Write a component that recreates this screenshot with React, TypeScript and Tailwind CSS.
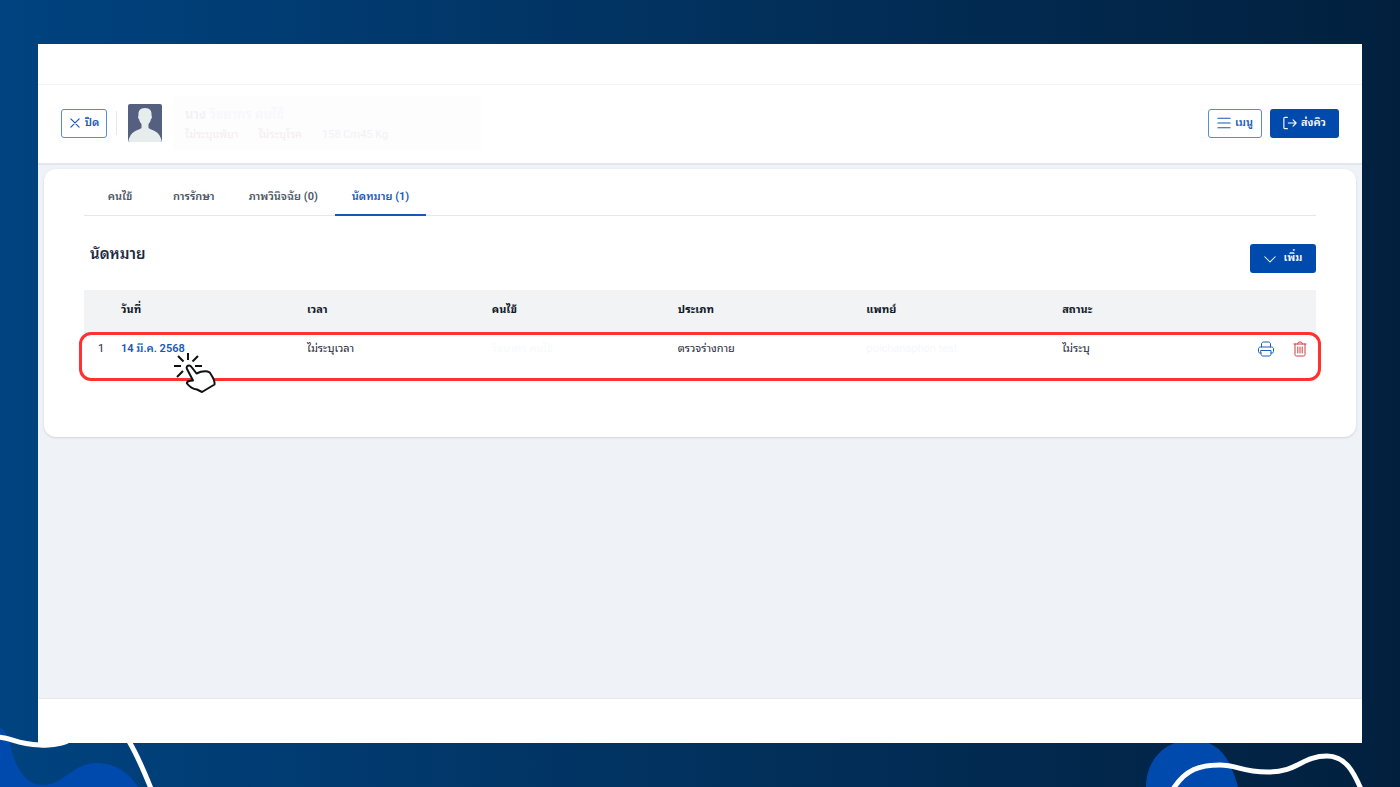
import type { ReactNode } from "react";

type Appointment = {
  id: number;
  date: string;
  time: string;
  patient: string;
  type: string;
  doctor: string;
  status: string;
};

type Tab = {
  label: string;
  active: boolean;
};

const tabs: Tab[] = [
  { label: "คนไข้", active: false },
  { label: "การรักษา", active: false },
  { label: "ภาพวินิจฉัย (0)", active: false },
  { label: "นัดหมาย (1)", active: true },
];

const appointments: Appointment[] = [
  {
    id: 1,
    date: "14 มี.ค. 2568",
    time: "ไม่ระบุเวลา",
    patient: "วิชยากร คนไข้",
    type: "ตรวจร่างกาย",
    doctor: "polchanaphon test",
    status: "ไม่ระบุ",
  },
];

type IconProps = {
  className: string;
  children: ReactNode;
};

const Icon = ({ className, children }: IconProps) => (
  <svg
    viewBox="0 0 16 16"
    fill="none"
    stroke="currentColor"
    strokeLinecap="round"
    strokeLinejoin="round"
    aria-hidden="true"
    className={className}
  >
    {children}
  </svg>
);

const Backdrop = () => (
  <>
    <svg
      viewBox="0 0 160 64"
      className="absolute bottom-0 left-0 h-16 w-40"
      aria-hidden="true"
    >
      <path
        d="M0 4C6 8 9 16 12 29C18 50 28 62 43 62C64 62 72 40 97 40C114 40 128 48 138 64H0Z"
        fill="#004aad"
      />
      <path
        d="M-4 14C12 14 14 21 40 22C56 23 68 20 80 10C96 -2 116 -4 130 20C138 34 144 48 152 68"
        fill="none"
        stroke="#fff"
        strokeWidth="5"
      />
    </svg>
    <svg
      viewBox="0 0 260 64"
      className="absolute right-0 bottom-0 h-16 w-65"
      aria-hidden="true"
    >
      <path
        d="M6 64C6 38 24 17 52 17C78 17 90 34 98 64Z"
        fill="#004aad"
      />
      <path
        d="M33 66C46 46 60 42 80 42C98 42 100 49 128 49C158 49 162 33 187 33C206 33 214 50 221 66"
        fill="none"
        stroke="#fff"
        strokeWidth="5"
      />
    </svg>
  </>
);

const PatientHeader = () => (
  <header className="flex h-[81px] items-center border-t border-b-2 border-t-gray-100 border-b-[#e3e7ec] bg-white px-[23px] pb-0.5">
    <button
      type="button"
      className="flex h-[29px] w-[46px] items-center justify-center gap-1 rounded-[3px] border border-[#5b8bd0] text-[11px] font-semibold text-[#1558b5]"
    >
      <Icon className="h-3 w-3">
        <path d="M2.5 2.5l11 11M13.5 2.5l-11 11" strokeWidth="1.6" />
      </Icon>
      ปิด
    </button>
    <div className="ml-[9px] h-6 w-px bg-slate-200" />
    <svg
      viewBox="0 0 34 38"
      className="ml-[11px] h-[38px] w-[34px] rounded-[2px]"
      role="img"
      aria-label="avatar"
    >
      <rect width="34" height="38" fill="#556080" />
      <path
        d="M17 4c5 0 7 3 6.500 7.500.8 1 .5 3-.6 3.800-.4 2-1.200 3.500-2.400 4.700v4c2 1.800 4.500 2 7 3.500 3 1.800 5 5 6 8.500V38H.5v-2c1-3.500 3-6.700 6-8.500 2.500-1.500 5-1.700 7-3.500v-4c-1.200-1.200-2-2.700-2.400-4.700-1.100-.8-1.400-2.800-.6-3.800C10 7 12 4 17 4z"
        fill="#e7eced"
      />
    </svg>
    <div className="ml-[11px] flex h-[54px] w-[308px] flex-col justify-center gap-1 bg-[#fdfdfe] px-3 pt-1">
      <p className="text-[13px] leading-4 font-semibold text-[#f8f7fa]">
        <span className="text-[#f1f1f4]">นาง</span> วิชยากร คนไข้
      </p>
      <div className="flex gap-5 text-[11px] leading-4 text-[#f6ecee]">
        <span>ไม่ระบุแพ้ยา</span>
        <span>ไม่ระบุโรค</span>
        <span className="text-[#f1f2f5]">158 Cm45 Kg</span>
      </div>
    </div>
    <div className="ml-auto flex gap-2">
      <button
        type="button"
        className="flex h-[29px] w-[54px] items-center justify-center gap-1 rounded-[3px] border border-[#5b8bd0] text-[11px] font-semibold text-[#1558b5]"
      >
        <Icon className="h-3.5 w-3.5">
          <path d="M1 2.500h14M1 8h14M1 13.500h14" strokeWidth="1.2" />
        </Icon>
        เมนู
      </button>
      <button
        type="button"
        className="flex h-[29px] w-[69px] items-center justify-center gap-1 rounded-[3px] bg-[#004aad] text-[11px] font-semibold text-white"
      >
        <Icon className="h-3.5 w-3.5">
          <path
            d="M5 1.500H2.500C1.500 1.500 1 2 1 3v10c0 1 .5 1.500 1.500 1.500H5M6 8h9M11.500 4.500L15 8l-3.500 3.500"
            strokeWidth="1.3"
          />
        </Icon>
        ส่งคิว
      </button>
    </div>
  </header>
);

const ClickHand = () => (
  <svg
    viewBox="0 0 42 42"
    className="absolute top-[61px] left-[90px] h-[42px] w-[42px]"
    fill="none"
    stroke="#111"
    strokeWidth="2"
    strokeLinejoin="round"
    aria-hidden="true"
  >
    <path d="M14 2v7M4 5l5.500 5.500M24 5l-5.500 5.500M0 15h7M21 15h7M3 26l6-6" />
    <path
      d="M13 18c-1.500-3 2.500-5 4.500-2l5 6.500c3-1.500 7-2.500 11-2 2 .5 3 1.500 3.500 3 2 3 4 6 3.500 10L28 41l-5-2.500c-4-.5-7-2-10-6-.5-2 2-3 6-3z"
      fill="#fff"
    />
  </svg>
);

const AppointmentTable = () => (
  <div className="relative mt-[17px]">
    <table className="w-full table-fixed text-left text-[11px] text-gray-800">
      <colgroup>
        <col className="w-[3%]" />
        <col className="w-[15.1%]" />
        <col className="w-[15%]" />
        <col className="w-[15.1%]" />
        <col className="w-[15.3%]" />
        <col className="w-[15.9%]" />
        <col className="w-[12%]" />
        <col />
      </colgroup>
      <thead>
        <tr className="h-[42px] border-b border-gray-200 bg-[#f2f3f5] text-gray-900">
          <th />
          <th className="pb-0.5">วันที่</th>
          <th className="pb-0.5">เวลา</th>
          <th className="pb-0.5">คนไข้</th>
          <th className="pb-0.5">ประเภท</th>
          <th className="pb-0.5">แพทย์</th>
          <th className="pb-0.5">สถานะ</th>
          <th />
        </tr>
      </thead>
      <tbody>
        {appointments.map((item) => (
          <tr key={item.id} className="h-[50px] align-top leading-4">
            <td className="pt-2 pl-3.5">{item.id}</td>
            <td className="pt-2">
              <a href="#appointment" className="font-semibold text-[#1558b5]">
                {item.date}
              </a>
            </td>
            <td className="pt-2">{item.time}</td>
            <td className="pt-2 text-[#f8f9fb]">{item.patient}</td>
            <td className="pt-2">{item.type}</td>
            <td className="pt-2 text-[#f6f7fa]">{item.doctor}</td>
            <td className="pt-2">{item.status}</td>
            <td className="pt-2">
              <div className="flex justify-end gap-[18px] pr-2">
                <button type="button" aria-label="พิมพ์" className="text-[#1d5fb8]">
                  <Icon className="h-4 w-4">
                    <path d="M3.500 6V3c0-1 .8-2 2-2h5c1.200 0 2 1 2 2v3M3 12H2c-1 0-1.500-.5-1.500-1.500V8c0-1 .8-2 2-2h11c1.200 0 2 1 2 2v2.500c0 1-.5 1.500-1.500 1.500h-1M3 9.500h10V13c0 1.200-.8 2-2 2H5c-1.200 0-2-.8-2-2z" />
                  </Icon>
                </button>
                <button type="button" aria-label="ลบ" className="text-[#cc3d3d]">
                  <Icon className="h-4 w-4">
                    <path d="M2 3h12M5.500 3c0-1.200.8-2 2.500-2s2.500.8 2.500 2M3 3v10.500c0 1 .5 1.500 1.500 1.500h7c1 0 1.500-.5 1.500-1.500V3M5.800 6v6M8 6v6M10.200 6v6" />
                  </Icon>
                </button>
              </div>
            </td>
          </tr>
        ))}
      </tbody>
    </table>
    <div className="pointer-events-none absolute top-[42px] -right-[5px] -left-[5px] h-[49px] rounded-xl border-3 border-[#ff3131]" />
    <ClickHand />
  </div>
);

const App = () => (
  <div className="relative flex min-h-screen flex-col overflow-hidden bg-linear-to-r from-[#004380] to-[#02203e] px-[38px] py-11 font-['Roboto','Noto_Sans_Thai_Looped','Loma','Waree','Garuda','Noto_Sans',sans-serif]">
    <Backdrop />
    <div className="relative flex flex-1 flex-col bg-white">
      <div className="h-10" />
      <PatientHeader />
      <main className="flex-1 border-b border-gray-200 bg-[#eff2f7] px-1.5 pt-1">
        <section className="rounded-xl bg-white px-10 pb-[55px] shadow-sm">
          <nav className="flex h-[47px] border-b border-gray-200 text-[11px] font-semibold">
            {tabs.map((tab) => (
              <a
                key={tab.label}
                href="#tab"
                className={`-mb-px flex min-w-[72px] items-center justify-center border-b-2 px-[17px] pt-3 ${
                  tab.active
                    ? "border-[#1558b5] text-[#1558b5]"
                    : "border-transparent text-gray-600"
                }`}
              >
                {tab.label}
              </a>
            ))}
          </nav>
          <div className="mt-7 flex justify-between">
            <h1 className="pl-1.5 text-[15px] leading-5 font-semibold text-slate-800">
              นัดหมาย
            </h1>
            <button
              type="button"
              className="flex h-[29px] w-[66px] items-center justify-center gap-2 rounded-[3px] bg-[#004aad] text-[11px] font-semibold text-white"
            >
              <Icon className="h-3 w-3">
                <path d="M1 5l7 7 7-7" strokeWidth="1.4" />
              </Icon>
              เพิ่ม
            </button>
          </div>
          <AppointmentTable />
        </section>
      </main>
      <div className="h-11" />
    </div>
  </div>
);

export default App;
